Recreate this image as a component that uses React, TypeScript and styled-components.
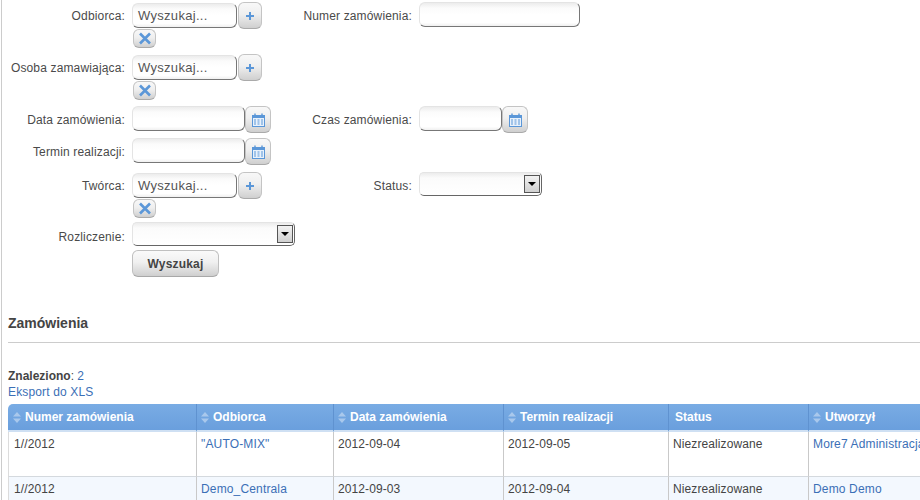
import React from "react";
import styled, { createGlobalStyle } from "styled-components";

const Global = createGlobalStyle`
  html, body { margin: 0; padding: 0; background: #fff; height: 500px; overflow: hidden; }
  body { font-family: "Liberation Sans", Arial, sans-serif; font-size: 12px; color: #444; }
`;

const Page = styled.div`
  width: 918px;
  height: 500px;
  margin-left: 1px;
  border-left: 1px solid #ccc;
  overflow: hidden;
  background: #fff;
`;

const Form = styled.div`
  display: flex;
  flex-direction: column;
  padding-top: 2px;
`;

const Row = styled.div<{ $h: number }>`
  display: flex;
  height: ${(p) => p.$h}px;
`;

const Field = styled.div<{ $w?: number }>`
  display: grid;
  grid-template-columns: 123px auto;
  column-gap: 7px;
  align-items: start;
  width: ${(p) => (p.$w ? `${p.$w}px` : "auto")};
  flex: none;
`;

const Label = styled.label<{ $top?: number }>`
  text-align: right;
  line-height: 14px;
  padding-top: ${(p) => p.$top ?? 7}px;
  color: #4a4a4a;
  white-space: nowrap;
  letter-spacing: 0.15px;
`;

const Control = styled.div`
  display: flex;
  flex-wrap: wrap;
  align-items: flex-start;
`;

const Input = styled.div<{ $w: number; $top?: number }>`
  box-sizing: border-box;
  width: ${(p) => p.$w}px;
  height: 25px;
  margin-top: ${(p) => p.$top ?? 0}px;
  padding: 3px 5px;
  border: 1px solid #e4e4e4;
  border-right-color: #777;
  border-bottom-color: #777;
  border-radius: 6px;
  background: linear-gradient(#ececec 0, #fbfbfb 5px, #fff 50%, #fff 85%, #f0f0f0 100%);
  font-size: 13px;
  line-height: 17px;
  letter-spacing: 0.3px;
  color: #555;
`;

const IconButton = styled.button<{ $w: number; $h: number; $ml?: number }>`
  box-sizing: border-box;
  width: ${(p) => p.$w}px;
  height: ${(p) => p.$h}px;
  margin: 0 0 0 ${(p) => p.$ml ?? 0}px;
  padding: 0;
  display: flex;
  align-items: center;
  justify-content: center;
  border: 1px solid #c4c4c4;
  border-bottom-color: #aaa;
  border-radius: 6px;
  background: linear-gradient(#f8f8f8 0, #efefef 45%, #cfcfcf 100%);
`;

const RemoveRow = styled.div`
  flex-basis: 100%;
  padding-left: 1px;
`;

const Select = styled.div<{ $w: number }>`
  box-sizing: border-box;
  width: ${(p) => p.$w}px;
  height: 24px;
  border: 1px solid #e4e4e4;
  border-right-color: #666;
  border-bottom-color: #666;
  border-radius: 5px;
  background: linear-gradient(#ececec 0, #fbfbfb 5px, #fff 100%);
  display: flex;
  justify-content: flex-end;
  align-items: center;
  padding-right: 1px;
`;

const SelectArrow = styled.div`
  box-sizing: border-box;
  width: 16px;
  height: 18px;
  border: 1px solid #555;
  background: linear-gradient(#f2f2f2, #d0d0d0);
  display: flex;
  align-items: center;
  justify-content: center;
  &::after {
    content: "";
    border-left: 4px solid transparent;
    border-right: 4px solid transparent;
    border-top: 4px solid #000;
  }
`;

const SubmitRow = styled.div`
  padding-left: 130px;
  height: 27px;
`;

const Submit = styled.button`
  box-sizing: border-box;
  width: 87px;
  height: 27px;
  border: 1px solid #c0c0c0;
  border-bottom-color: #a8a8a8;
  border-radius: 6px;
  background: linear-gradient(#fafafa 0, #f0f0f0 45%, #cfcfcf 100%);
  font-family: inherit;
  font-size: 12px;
  font-weight: bold;
  letter-spacing: 0.2px;
  color: #444;
  padding: 0;
`;

const Section = styled.div`
  padding: 38px 0 0 6px;
`;

const Heading = styled.h2`
  margin: 0;
  font-size: 14px;
  line-height: 16px;
  font-weight: bold;
  color: #444;
  padding-bottom: 11px;
  border-bottom: 1px solid #ccc;
`;

const Summary = styled.div`
  margin-top: 25px;
  line-height: 16px;
  color: #444;
`;

const Strong = styled.b`
  color: #444;
`;

const Link = styled.a`
  color: #3b6fb6;
  text-decoration: none;
  white-space: nowrap;
  letter-spacing: 0.15px;
`;

const Table = styled.table`
  margin-top: 4px;
  border-collapse: separate;
  border-spacing: 0;
  table-layout: fixed;
  width: 1050px;
`;

const Th = styled.th<{ $w: number; $first?: boolean }>`
  box-sizing: border-box;
  width: ${(p) => p.$w}px;
  height: 28px;
  padding: 0 0 0 ${(p) => (p.$first ? 5 : 4)}px;
  background: linear-gradient(#79ace4, #6a9fdd);
  border-right: 1px solid #5f92d0;
  border-bottom: 2px solid #cfe0f3;
  border-top-left-radius: ${(p) => (p.$first ? 5 : 0)}px;
  color: #fff;
  font-size: 12px;
  font-weight: bold;
  text-align: left;
  white-space: nowrap;
`;

const ThInner = styled.span<{ $plain?: boolean }>`
  display: flex;
  align-items: center;
  gap: 4px;
  padding-left: ${(p) => (p.$plain ? 2 : 0)}px;
`;

const Td = styled.td<{ $h: number; $alt?: boolean }>`
  box-sizing: border-box;
  height: ${(p) => p.$h}px;
  padding: 5px 4px 0;
  vertical-align: top;
  background: ${(p) => (p.$alt ? "#f3f8fe" : "#fff")};
  border-right: 1px solid #c9c9c9;
  border-bottom: 1px solid #d4d9de;
  line-height: 14px;
  color: #444;
  white-space: nowrap;
  overflow: hidden;
  letter-spacing: 0.1px;
  &:first-child {
    padding-left: 5px;
    border-left: 1px solid #dcdcdc;
  }
`;

const Plus = () => (
  <svg width="10" height="10" viewBox="0 0 10 10">
    <path d="M5 1v8M1 5h8" stroke="#5b97d8" strokeWidth="2" />
  </svg>
);

const Cross = () => (
  <svg width="14" height="13" viewBox="0 0 14 13">
    <path d="M2 1.500l10 10M12 1.500l-10 10" stroke="#5b97d8" strokeWidth="2.600" />
  </svg>
);

const Calendar = () => (
  <svg width="13" height="14" viewBox="0 0 13 14">
    <rect x="0.5" y="2.5" width="12" height="11" fill="#e8f1fb" stroke="#5b97d8" />
    <rect x="0" y="2" width="13" height="3" fill="#5b97d8" />
    <path d="M3 0.5v3M10 0.5v3" stroke="#5b97d8" strokeWidth="1.4" />
    <path
      d="M2 7h2M5.500 7h2M9 7h2M2 9h2M5.500 9h2M9 9h2M2 11h2M5.500 11h2M9 11h2"
      stroke="#5b97d8"
      strokeWidth="1"
    />
  </svg>
);

const Sort = () => (
  <svg width="8" height="11" viewBox="0 0 8 11">
    <path d="M4 0l4 4.500H0zM4 11L0 6.500h8z" fill="#a9c8ec" />
  </svg>
);

const Search = () => (
  <Control>
    <Input $w={105} $top={1}>
      Wyszukaj...
    </Input>
    <IconButton $w={24} $h={27} $ml={1}>
      <Plus />
    </IconButton>
    <RemoveRow>
      <IconButton $w={23} $h={19}>
        <Cross />
      </IconButton>
    </RemoveRow>
  </Control>
);

const DateField = ({ w }: { w: number }) => (
  <Control>
    <Input $w={w}>{""}</Input>
    <IconButton $w={26} $h={27}>
      <Calendar />
    </IconButton>
  </Control>
);

const columns = [
  { w: 189, title: "Numer zamówienia", sort: true },
  { w: 137, title: "Odbiorca", sort: true },
  { w: 170, title: "Data zamówienia", sort: true },
  { w: 165, title: "Termin realizacji", sort: true },
  { w: 140, title: "Status", sort: false },
  { w: 249, title: "Utworzył", sort: true },
];

const rows = [
  ["1//2012", '"AUTO-MIX"', "2012-09-04", "2012-09-05", "Niezrealizowane", "More7 Administracja"],
  ["1//2012", "Demo_Centrala", "2012-09-03", "2012-09-04", "Niezrealizowane", "Demo Demo"],
];

export default function App() {
  return (
    <Page>
      <Global />
      <Form>
        <Row $h={52}>
          <Field $w={287}>
            <Label>Odbiorca:</Label>
            <Search />
          </Field>
          <Field>
            <Label>Numer zamówienia:</Label>
            <Input $w={161}>{""}</Input>
          </Field>
        </Row>
        <Row $h={52}>
          <Field>
            <Label>Osoba zamawiająca:</Label>
            <Search />
          </Field>
        </Row>
        <Row $h={32}>
          <Field $w={287}>
            <Label>Data zamówienia:</Label>
            <DateField w={113} />
          </Field>
          <Field>
            <Label>Czas zamówienia:</Label>
            <DateField w={83} />
          </Field>
        </Row>
        <Row $h={34}>
          <Field>
            <Label>Termin realizacji:</Label>
            <DateField w={113} />
          </Field>
        </Row>
        <Row $h={50}>
          <Field $w={287}>
            <Label>Twórca:</Label>
            <Search />
          </Field>
          <Field>
            <Label>Status:</Label>
            <Select $w={123}>
              <SelectArrow />
            </Select>
          </Field>
        </Row>
        <Row $h={28}>
          <Field>
            <Label $top={8}>Rozliczenie:</Label>
            <Select $w={163}>
              <SelectArrow />
            </Select>
          </Field>
        </Row>
        <SubmitRow>
          <Submit>Wyszukaj</Submit>
        </SubmitRow>
      </Form>
      <Section>
        <Heading>Zamówienia</Heading>
        <Summary>
          <Strong>Znaleziono</Strong>: <Link>2</Link>
          <br />
          <Link>Eksport do XLS</Link>
        </Summary>
        <Table>
          <thead>
            <tr>
              {columns.map((c, i) => (
                <Th key={c.title} $w={c.w} $first={i === 0}>
                  <ThInner $plain={!c.sort}>
                    {c.sort && <Sort />}
                    {c.title}
                  </ThInner>
                </Th>
              ))}
            </tr>
          </thead>
          <tbody>
            {rows.map((r, ri) => (
              <tr key={ri}>
                {r.map((v, ci) => (
                  <Td key={ci} $h={ri === 0 ? 45 : 30} $alt={ri === 1}>
                    {ci === 1 || ci === 5 ? <Link>{v}</Link> : v}
                  </Td>
                ))}
              </tr>
            ))}
          </tbody>
        </Table>
      </Section>
    </Page>
  );
}
